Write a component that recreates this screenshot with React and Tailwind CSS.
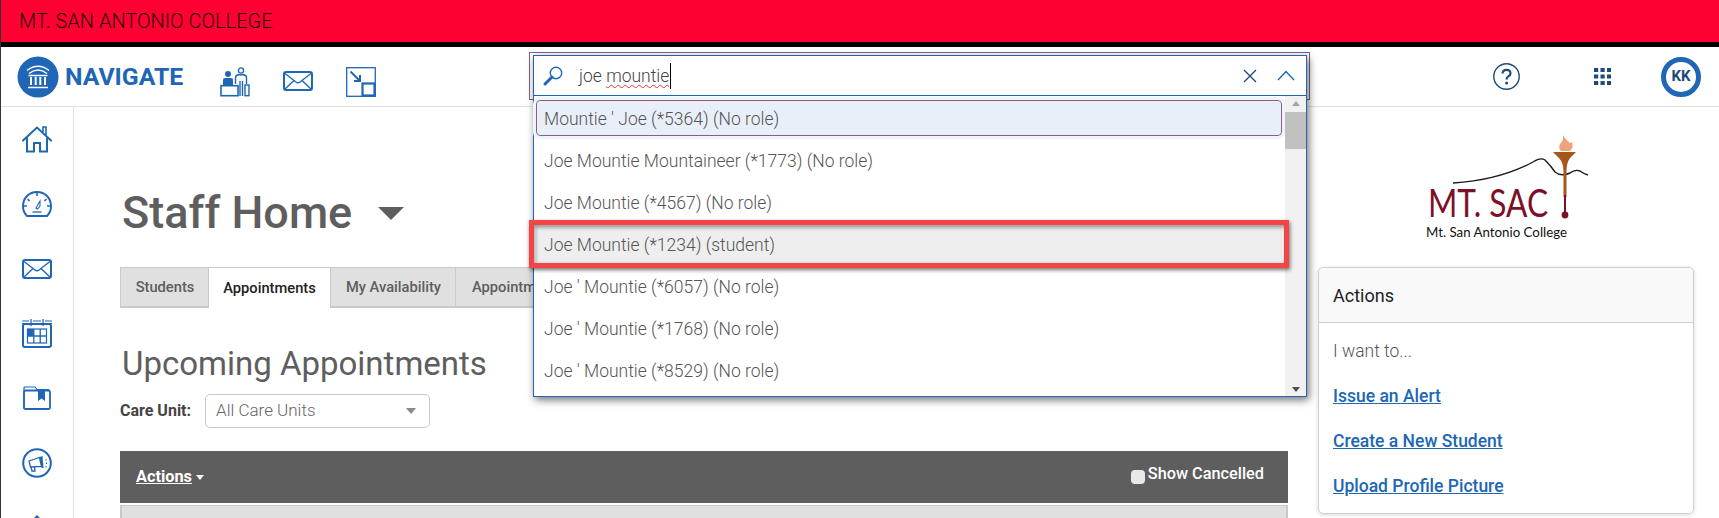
const BLUE = "#2066b6";

const results = [
  { label: "Mountie ' Joe (*5364) (No role)", active: true },
  { label: "Joe Mountie Mountaineer (*1773) (No role)" },
  { label: "Joe Mountie (*4567) (No role)" },
  { label: "Joe Mountie (*1234) (student)", marked: true },
  { label: "Joe ' Mountie (*6057) (No role)" },
  { label: "Joe ' Mountie (*1768) (No role)" },
  { label: "Joe ' Mountie (*8529) (No role)" },
];

function LogoMark() {
  return (
    <svg width="42" height="42" viewBox="0 0 42 42">
      <circle cx="21" cy="21" r="20.5" fill={BLUE} />
      <g fill="none" stroke="#fff" strokeWidth="1.5">
        <path d="M10 14.5 Q21 6 32 14.5" />
        <path d="M12 17.5 Q21 10.5 30 17.5" />
        <path d="M11.5 19.5 H30.5" />
        <path d="M14 21 V29 M18.7 21 V29 M23.3 21 V29 M28 21 V29" strokeWidth="2" />
        <path d="M11 31.5 H31" />
      </g>
    </svg>
  );
}

function AdvisorIcon() {
  return (
    <svg width="30" height="30" viewBox="0 0 30 30" fill="none" stroke={BLUE} strokeWidth="1.4">
      <circle cx="8" cy="7" r="3" fill={BLUE} stroke="none" />
      <path d="M3 18 V13 Q3 11 5 11 H11 Q13 11 13 13 V18 Z" fill={BLUE} stroke="none" />
      <rect x="1" y="18.7" width="17" height="10" strokeWidth="1.6" />
      <circle cx="21" cy="3.5" r="2.6" />
      <path d="M15.5 17 V11 Q15.5 7.8 18.5 7.8 H23.5 Q26.5 7.8 26.5 11 V17" />
      <path d="M20 14 V29 M22.5 14 V29" />
      <rect x="25" y="18" width="4" height="10.7" />
    </svg>
  );
}

function MailIcon({ size = 30 }) {
  return (
    <svg width={size} height={size * 0.67} viewBox="0 0 30 20" fill="none" stroke={BLUE}>
      <rect x="1" y="1" width="28" height="18" rx="2" strokeWidth="2" />
      <path d="M2 2.5 L13 11 Q15 12.3 17 11 L28 2.5" strokeWidth="1.4" />
      <path d="M2 18 L11 9.5 M28 18 L19 9.5" strokeWidth="1.4" />
    </svg>
  );
}

function ResizeIcon() {
  return (
    <svg width="30" height="30" viewBox="0 0 30 30" fill="none" stroke={BLUE}>
      <rect x="0.7" y="0.7" width="28.6" height="28.6" strokeWidth="1.3" />
      <rect x="16.5" y="16.5" width="12" height="12" strokeWidth="2.2" />
      <path d="M4.5 4.5 L13.5 13.5" strokeWidth="2" />
      <path d="M8 14 H14 V8" strokeWidth="2" />
    </svg>
  );
}

function HomeIcon() {
  return (
    <svg width="30" height="27" viewBox="0 0 30 27" fill="none" stroke={BLUE} strokeWidth="2">
      <path d="M1 14.5 L15 1.5 L29 14.5" strokeLinecap="round" />
      <path d="M5 11.5 V25.5 H12 V17 H18 V25.5 H25 V11.5" />
      <path d="M21 6 V1 H24 V9" strokeWidth="1.6" />
    </svg>
  );
}

function GaugeIcon() {
  return (
    <svg width="30" height="26" viewBox="0 0 30 26" fill="none" stroke={BLUE} strokeWidth="2">
      <path d="M5 25 Q1 21 1 15.5 C1 7 7 1 15 1 C23 1 29 7 29 15.5 Q29 21 25 25 Z" />
      <path d="M15 2 V5 M5.5 8 L7.5 10 M24.5 8 L22.5 10 M2 15 H5 M28 15 H25" strokeWidth="1.6" />
      <path d="M14 17 L18 10 L18 15 L15.5 18 Z" strokeWidth="1.1" />
      <path d="M10.5 21 H19.5" strokeWidth="1.3" />
    </svg>
  );
}

function CalendarIcon() {
  return (
    <svg width="30" height="29" viewBox="0 0 30 29" fill="none" stroke={BLUE}>
      <path d="M0 2 H7 M0 4.5 H7 M11 2 H19 M11 4.5 H19 M23 2 H30 M23 4.5 H30" strokeWidth="1.2" />
      <path d="M9 0 V7 M21 0 V7" strokeWidth="1.3" />
      <rect x="1" y="5" width="28" height="23" rx="2" strokeWidth="2" />
      <rect x="5.5" y="10" width="19" height="14" strokeWidth="1.2" />
      <rect x="5.5" y="10" width="6.3" height="7" fill={BLUE} stroke="none" />
      <path d="M5.5 17 H24.5 M11.8 10 V24 M18.2 10 V24" strokeWidth="1.3" />
    </svg>
  );
}

function FolderIcon() {
  return (
    <svg width="28" height="24" viewBox="0 0 28 24" fill="none" stroke={BLUE}>
      <path d="M1 23 V2 Q1 1 2 1 H12 L14 3.5 H26" strokeWidth="1.2" />
      <rect x="1" y="4.5" width="26" height="18.5" rx="1.5" strokeWidth="1.8" />
      <path d="M15 4 H22 V15 L18.5 12.5 L15 15 Z" fill={BLUE} stroke="none" />
    </svg>
  );
}

function MegaphoneIcon() {
  return (
    <svg width="30" height="30" viewBox="0 0 30 30" fill="none" stroke={BLUE}>
      <circle cx="15" cy="15" r="13.8" strokeWidth="2" />
      <path d="M7 13 L17.5 9.5 L19.5 18.5 L8.5 19 Z" strokeWidth="1.3" />
      <path d="M17.5 9 L20.5 8 L21.5 20 L19.5 20 Z" fill={BLUE} stroke="none" />
      <path d="M9 19 L10 23 H13 L12.5 19" strokeWidth="1.3" />
      <path d="M24 11 V12.5 M24.5 14.5 V16 M24 18 V19.5" strokeWidth="1" />
    </svg>
  );
}

function SideUpIcon() {
  return (
    <svg width="30" height="30" viewBox="0 0 30 30" fill={BLUE}>
      <path d="M15 3 L20 8 H10 Z" />
      <rect x="10" y="7" width="10" height="18" />
    </svg>
  );
}

function HelpIcon() {
  return (
    <svg width="27" height="27" viewBox="0 0 27 27" fill="none">
      <circle cx="13.5" cy="13.5" r="12.7" stroke="#1d4a7c" strokeWidth="1.4" />
      <path d="M9.5 10.5 Q9.7 6.8 13.5 6.8 Q17.5 6.8 17.5 10.2 Q17.5 12.2 15.3 13.4 Q13.6 14.4 13.6 16.4" stroke="#1d4a7c" strokeWidth="2.2" />
      <circle cx="13.6" cy="20" r="1.5" fill="#1d4a7c" />
    </svg>
  );
}

function GridIcon() {
  return (
    <svg width="17" height="17" viewBox="0 0 17 17" fill="#1d4a7c">
      {[0, 6.5, 13].map((y) =>
        [0, 6.5, 13].map((x) => <rect key={`${x}-${y}`} x={x} y={y} width="4.2" height="4" />)
      )}
    </svg>
  );
}

function SacLogo() {
  return (
    <svg width="170" height="108" viewBox="0 0 170 108">
      <path d="M28 48 Q75 45 108 27 Q116 22 120 25 Q126 31 130 37 Q136 42 145 38 Q150 34 155 36 Q159 39 163 40" fill="none" stroke="#1a1a1a" strokeWidth="1.4" />
      <path d="M138 0 Q139 5 135 9 Q133 13 136 16 H145 Q149 12 147 7 Q145 9 144 7 Q142 6 138 0 Z" fill="#eda47a" />
      <path d="M128 17 H151 L145 23 Q141.5 28 141.5 36 V62 H138.5 V36 Q138.5 28 134 23 Z" fill="#a4561b" />
      <rect x="139" y="60" width="2" height="20" fill="#7d0f26" />
      <circle cx="140" cy="80" r="3.4" fill="#7d0f26" />
      <text x="3" y="82" fontFamily="Lato, sans-serif" fontSize="38" fill="#7d0f26" textLength="120" lengthAdjust="spacingAndGlyphs">MT. SAC</text>
      <text x="1" y="102" fontFamily="Lato, sans-serif" fontSize="14" fill="#111" textLength="141" lengthAdjust="spacingAndGlyphs">Mt. San Antonio College</text>
    </svg>
  );
}

function SearchBox() {
  return (
    <div className="absolute left-[528px] top-[52px] h-[48px] w-[781px] border border-[#8a5f7c]">
      <div className="absolute left-[3px] top-[2px] z-10 w-[774px] border border-[#2066b6] bg-white shadow-[2px_3px_8px_rgba(0,0,0,0.55)]">
        <div className="flex h-[40px] items-center border-b border-[#2066b6] pl-[9px] pr-[11px]">
          <svg width="20" height="20" viewBox="0 0 20 20" fill="none" stroke={BLUE}>
            <circle cx="13" cy="7" r="5.7" strokeWidth="1.4" />
            <path d="M9 11 L2 18" strokeWidth="3" strokeLinecap="round" />
          </svg>
          <span className="ml-[16px] border-r border-black pr-px text-[17.5px] leading-[26px] font-light text-[#444]">
            joe <span className="underline decoration-wavy decoration-[#e8362f] decoration-1 underline-offset-2">mountie</span>
          </span>
          <svg className="ml-auto" width="14" height="14" viewBox="0 0 14 14" fill="none" stroke="#1d4a7c" strokeWidth="1.4">
            <path d="M1 1 L13 13 M13 1 L1 13" />
          </svg>
          <svg className="ml-[20px]" width="18" height="11" viewBox="0 0 18 11" fill="none" stroke={BLUE} strokeWidth="1.4">
            <path d="M1 10 L9 1.5 L17 10" />
          </svg>
        </div>
        <div className="flex h-[300px]">
          <ul className="min-w-0 flex-1 pt-[4px] pl-[2px] pr-[3px]">
            {results.map((item) => (
              <li
                key={item.label}
                className={
                  item.active
                    ? "flex h-[36px] items-center rounded-sm border border-[#8a5f7c] bg-[#e8eff9] px-[7px] pt-[2px] text-[17.5px] font-light text-[#555] outline-3 outline-[#eef3fb]"
                    : item.marked
                      ? "mt-[3px] flex h-[39px] items-center bg-[#eeeeee] px-[8px] text-[17.5px] font-light text-[#555]"
                      : "mt-[3px] flex h-[39px] items-center px-[8px] text-[17.5px] font-light text-[#555] [&:nth-child(2)]:mt-[6px]"
                }
              >
                {item.label}
              </li>
            ))}
          </ul>
          <div className="flex w-[21px] flex-col items-center bg-[#f1f1f1] pt-[5px] pb-[4px]">
            <span className="h-0 w-0 border-x-[4px] border-b-[5px] border-x-transparent border-b-[#a3a3a3]" />
            <span className="mt-[6px] h-[37px] w-full bg-[#c1c1c1]" />
            <span className="mt-auto h-0 w-0 border-x-[4px] border-t-[5px] border-x-transparent border-t-[#505050]" />
          </div>
        </div>
        {/* red marker drawn on top of the screenshot */}
        <div className="absolute -left-[5px] top-[164px] h-[48px] w-[760px] border-[5px] border-[#f44545] shadow-[1px_2px_4px_rgba(0,0,0,0.55),inset_1px_2px_4px_rgba(0,0,0,0.45)]" />
      </div>
    </div>
  );
}

function ActionLink({ children }) {
  return (
    <a className="block text-[17.5px] leading-[45px] font-medium text-[#2066b6] underline" href="#">
      {children}
    </a>
  );
}

export default function App() {
  return (
    <div className="relative h-[518px] w-[1719px] overflow-hidden border-l border-[#333] bg-white font-['Roboto',sans-serif]">
      <div className="flex h-[47px] items-center border-b-[5px] border-black bg-[#ff0033] pl-[18px] text-[20px] font-light text-[#2a0008]">
        MT. SAN ANTONIO COLLEGE
      </div>

      <header className="flex h-[60px] items-center border-b border-[#e2e2e2] pl-[16px] pr-[18px]">
        <LogoMark />
        <span className="ml-[6px] text-[24.8px] font-bold text-[#2066b6]">NAVIGATE</span>
        <div className="ml-[37px] flex items-center gap-[33px] pt-[10px]">
          <AdvisorIcon />
          <MailIcon />
          <ResizeIcon />
        </div>
        <div className="ml-auto flex items-center">
          <HelpIcon />
          <span className="ml-[74px]"><GridIcon /></span>
          <div className="ml-[50px] flex h-[40px] w-[40px] items-center justify-center rounded-full border-[5px] border-[#2066b6] text-[15px] font-bold text-[#1d4a7c]">
            KK
          </div>
        </div>
      </header>

      <div className="flex h-[411px]">
        <nav className="flex w-[73px] shrink-0 flex-col items-center border-r border-[#e2e2e2]">
          {[HomeIcon, GaugeIcon, MailIcon, CalendarIcon, FolderIcon, MegaphoneIcon, SideUpIcon].map((Icon, index) => (
            <div key={index} className="flex h-[64.7px] shrink-0 items-center justify-center">
              <Icon />
            </div>
          ))}
        </nav>

        <main className="flex min-w-0 flex-1 pl-[46px]">
          <div className="w-[1168px] shrink-0 pt-[80px]">
            <div className="flex items-center">
              <h1 className="ml-[2px] text-[45px] leading-[52px] font-medium text-[#5e5e5e]">Staff Home</h1>
              <span className="ml-[26px] h-0 w-0 border-x-[13px] border-t-[13px] border-x-transparent border-t-[#5e5e5e]" />
            </div>

            <div className="mt-[28px] flex h-[41px] items-stretch text-[14.7px] font-medium">
              <div className="flex w-[89px] items-center justify-center border border-b-2 border-[#c9c9c9] bg-[#e0e0e0] pl-px text-[#5e5e5e]">Students</div>
              <div className="flex w-[122px] items-center justify-center border-t border-r border-[#c9c9c9] bg-white text-[#222]">Appointments</div>
              <div className="flex w-[125px] items-center justify-center border-y border-r border-b-2 border-[#c9c9c9] bg-[#e0e0e0] pl-px text-[#5e5e5e]">My Availability</div>
              <div className="flex w-[200px] items-center border-y border-r border-b-2 border-[#c9c9c9] bg-[#e0e0e0] pl-[16px] text-[#5e5e5e]">Appointment Queues</div>
            </div>

            <h2 className="mt-[36px] ml-[2px] text-[33px] leading-[40px] text-[#5e5e5e]">Upcoming Appointments</h2>

            <div className="mt-[10px] flex items-center">
              <label className="text-[16px] font-bold text-[#444]">Care Unit:</label>
              <div className="ml-[14px] flex h-[34px] w-[225px] items-center justify-between rounded-[5px] border border-[#c9c9c9] pl-[10px] pr-[13px] text-[17px] font-light text-[#666]">
                All Care Units
                <span className="h-0 w-0 border-x-[5px] border-t-[6px] border-x-transparent border-t-[#8a8a8a]" />
              </div>
            </div>

            <div className="mt-[23px] flex h-[52px] items-center justify-between bg-[#5e5e5e] pl-[16px] pr-[24px] text-[16.3px] text-white">
              <span className="flex items-center gap-[4px] pt-px font-bold">
                <span className="underline">Actions</span>
                <span className="h-0 w-0 border-x-[4px] border-t-[5px] border-x-transparent border-t-white" />
              </span>
              <span className="-mt-[5px] flex items-center gap-[3px] font-medium">
                <input type="checkbox" className="mt-[5px] h-[14px] w-[14px] appearance-none rounded-sm bg-[#e8e8e8]" readOnly />
                Show Cancelled
              </span>
            </div>
            <div className="mt-[2px] h-[40px] border-x-2 border-t border-[#c9c9c9] bg-[#e0e0e0]" />
          </div>

          <aside className="ml-[30px] w-[376px] shrink-0">
            <div className="ml-[107px] mt-[28px]">
              <SacLogo />
            </div>
            <section className="mt-[24px] h-[247px] rounded-[5px] border border-[#d0d0d0] shadow-[0_1px_4px_rgba(0,0,0,0.15)]">
              <div className="flex h-[55px] items-center rounded-t-[5px] border-b border-[#cfcfcf] bg-[#f9f9f9] pl-[14px] text-[18px] text-[#222]">
                Actions
              </div>
              <div className="pl-[14px] pt-[6px]">
                <p className="text-[17.5px] leading-[45px] font-light text-[#555]">I want to...</p>
                <ActionLink>Issue an Alert</ActionLink>
                <ActionLink>Create a New Student</ActionLink>
                <ActionLink>Upload Profile Picture</ActionLink>
              </div>
            </section>
          </aside>
        </main>
      </div>

      <SearchBox />
    </div>
  );
}
